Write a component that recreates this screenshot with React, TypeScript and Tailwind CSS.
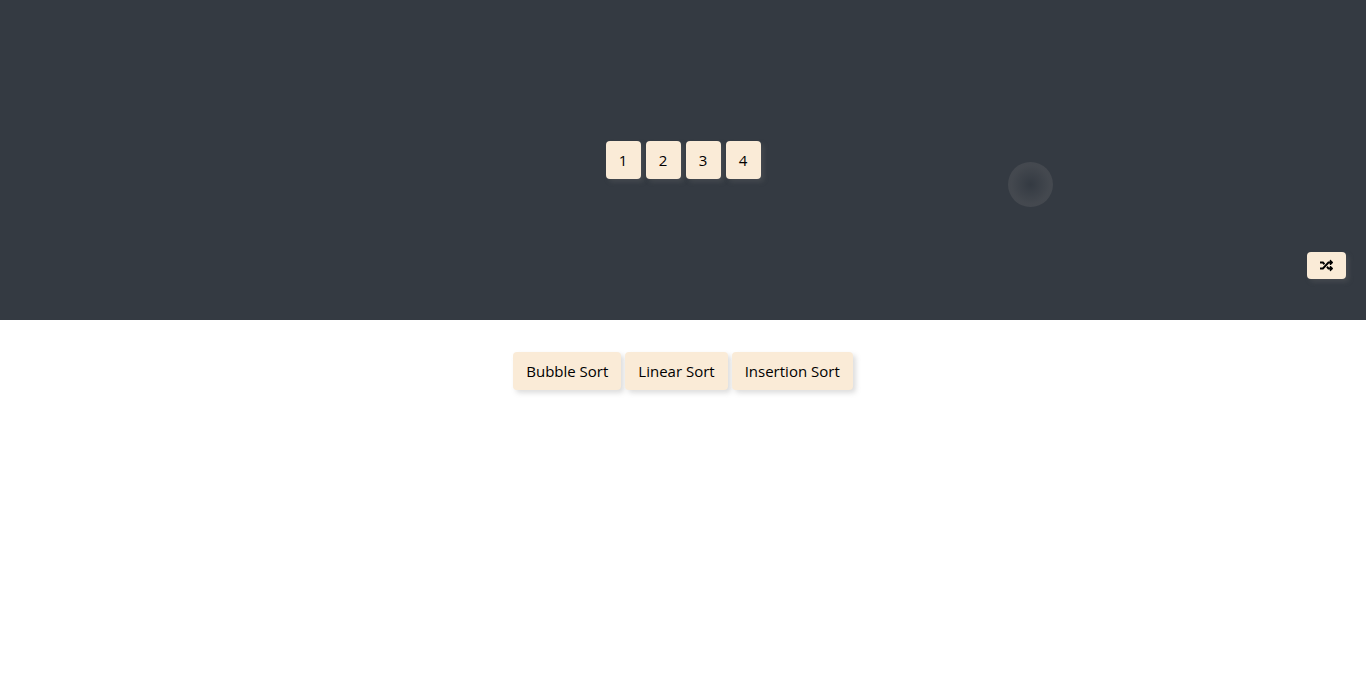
import { useState } from "react";
import { FaRandom } from "react-icons/fa";

const face =
  "rounded bg-[#faebd7] text-black cursor-pointer shadow-[3px_3px_5px_rgba(119,119,119,0.25)]";

const algorithms = ["Bubble Sort", "Linear Sort", "Insertion Sort"];

function NumberTile({ value }: { value: number }) {
  return (
    <div className={`${face} flex h-[38px] w-[35px] items-center justify-center`}>
      {value}
    </div>
  );
}

export default function App() {
  const [numbers, setNumbers] = useState([1, 2, 3, 4]);

  const shuffle = () =>
    setNumbers((current) => [...current].sort(() => Math.random() - 0.5));
  const sort = () => setNumbers((current) => [...current].sort((a, b) => a - b));

  return (
    <div className="min-h-screen bg-white font-['Open_Sans','Noto_Sans',sans-serif] text-[15px] leading-6 text-black">
      <section className="relative flex h-80 items-center justify-center bg-[#343a42]">
        <div className="flex gap-[5px]">
          {numbers.map((value) => (
            <NumberTile key={value} value={value} />
          ))}
        </div>
        <span
          aria-hidden="true"
          className="absolute top-[162px] left-[1008px] size-[45px] rounded-full bg-[radial-gradient(circle,rgba(255,240,230,0)_0%,rgba(255,240,230,0.08)_60%)]"
        />
        <button
          type="button"
          aria-label="Shuffle"
          onClick={shuffle}
          className={`${face} absolute right-5 bottom-[41px] flex h-[27px] w-[39px] items-center justify-center`}
        >
          <FaRandom size={13} />
        </button>
      </section>
      <main className="flex justify-center gap-1 pt-8">
        {algorithms.map((name) => (
          <button key={name} type="button" onClick={sort} className={`${face} px-[13px] py-[7px]`}>
            {name}
          </button>
        ))}
      </main>
    </div>
  );
}
